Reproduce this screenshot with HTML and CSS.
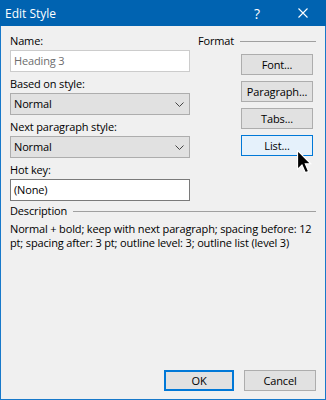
FILE: index.html
```html
<html>
  <head>
    <link rel="stylesheet" href="styles.css">
  </head>
  <body>
    <div id="window">
      <div id="titlebar">
        <span class="title">Edit Style</span>
        <span class="caption-button">?</span>
        <span class="caption-button">
          <svg width="10" height="10" viewBox="0 0 10 10"><path d="M0.5 0.5 L9.5 9.5 M9.5 0.5 L0.5 9.5" stroke="#fff" stroke-width="1.1"/></svg>
        </span>
      </div>

      <div id="client">
        <div id="top">
          <!-- Left column: name and style fields -->
          <div id="fields">
            <div class="field">
              <label>Name:</label>
              <div class="textbox disabled">Heading 3</div>
            </div>
            <div class="field">
              <label>Based on style:</label>
              <div class="combo">Normal
                <svg width="9" height="5" viewBox="0 0 9 5"><path d="M0.5 0.5 L4.5 4.5 L8.5 0.5" fill="none" stroke="#444"/></svg>
              </div>
            </div>
            <div class="field">
              <label>Next paragraph style:</label>
              <div class="combo">Normal
                <svg width="9" height="5" viewBox="0 0 9 5"><path d="M0.5 0.5 L4.5 4.5 L8.5 0.5" fill="none" stroke="#444"/></svg>
              </div>
            </div>
            <div class="field">
              <label>Hot key:</label>
              <div class="textbox">(None)</div>
            </div>
          </div>

          <!-- Right column: format buttons -->
          <div id="format">
            <div class="group-head"><span>Format</span><span class="rule"></span></div>
            <div class="button">Font...</div>
            <div class="button">Paragraph...</div>
            <div class="button">Tabs...</div>
            <div class="button hover">List...</div>
          </div>
        </div>

        <div id="description">
          <div class="group-head"><span>Description</span><span class="rule"></span></div>
          <p>Normal + bold; keep with next paragraph; spacing before: 12 pt; spacing after: 3 pt; outline level: 3; outline list (level 3)</p>
        </div>

        <div id="footer">
          <div class="button default ok">OK</div>
          <div class="button cancel">Cancel</div>
        </div>
      </div>

      <svg id="cursor" width="16" height="25" viewBox="0 0 14.5 22.7">
        <path d="M0.5 0.5 L0.5 17.5 L4.5 13.5 L7.5 20.5 L10.5 19.5 L7.5 12.5 L12.5 12.5 Z" fill="#000" stroke="#fff" stroke-width="1"/>
      </svg>
    </div>
  </body>
</html>
```

FILE: styles.css
```css
body {
  margin: 0;
  font-family: "Open Sans", "Noto Sans", sans-serif;
  font-size: 11px;
  letter-spacing: -0.15px;
  color: #000;
}

/* Window frame */
#window {
  position: relative;
  width: 326px;
  height: 400px;
  box-sizing: border-box;
  background: #1879ca;
  padding: 0 1px 1px 1px;
  display: flex;
  flex-direction: column;
}

#titlebar {
  height: 26px;
  background: #0063b1;
  margin: 0 -1px;
  display: flex;
  align-items: center;
  color: #fff;
  letter-spacing: 0;
}

  #titlebar .title {
    flex: 1;
    padding-left: 5px;
    font-size: 12px;
  }

  .caption-button {
    width: 46px;
    height: 26px;
    display: flex;
    align-items: center;
    justify-content: center;
    font-size: 14px;
  }

#client {
  flex: 1;
  background: #f0f0f0;
  padding: 7px 9px 8px 9px;
  display: flex;
  flex-direction: column;
}

#top {
  display: flex;
  gap: 8px;
}

/* Left column */
#fields {
  width: 180px;
  display: flex;
  flex-direction: column;
  gap: 4px;
}

.field label {
  display: block;
  height: 16px;
  line-height: 16px;
  margin-bottom: 1px;
}

.textbox, .combo {
  height: 22px;
  box-sizing: border-box;
  padding: 0 3px;
  line-height: 20px;
  background: #fff;
  border: 1px solid #7a7a7a;
}

  .textbox.disabled {
    border-color: #cccccc;
    color: #6d6d6d;
  }

.combo {
  background: #e1e1e1;
  border-color: #adadad;
  display: flex;
  justify-content: space-between;
  align-items: center;
}

  .combo svg {
    margin-right: 2px;
  }

/* Right column */
#format {
  flex: 1;
  display: flex;
  flex-direction: column;
  align-items: flex-end;
  gap: 6px;
}

.group-head {
  display: flex;
  align-items: center;
  height: 16px;
  line-height: 16px;
  align-self: stretch;
}

  .group-head .rule {
    flex: 1;
    height: 1px;
    background: #a0a0a0;
    margin-left: 6px;
  }

#format .group-head {
  margin-bottom: -1px;
}

.button {
  width: 72px;
  height: 21px;
  box-sizing: border-box;
  border: 1px solid #adadad;
  background: #e1e1e1;
  text-align: center;
  line-height: 19px;
}

#format .button {
  margin-right: 3px;
}

  .button.hover {
    background: #e5f1fb;
    border-color: #0078d7;
  }

  .button.default {
    border: 2px solid #0078d7;
    line-height: 17px;
  }

/* Description */
#description {
  margin-top: 2px;
}

  #description p {
    margin: 3px 0 0 0;
    line-height: 14px;
  }

#footer {
  margin-top: auto;
  display: flex;
  justify-content: flex-end;
  gap: 10px;
}

  #footer .ok {
    width: 70px;
  }

#cursor {
  position: absolute;
  left: 297px;
  top: 150px;
}
```
